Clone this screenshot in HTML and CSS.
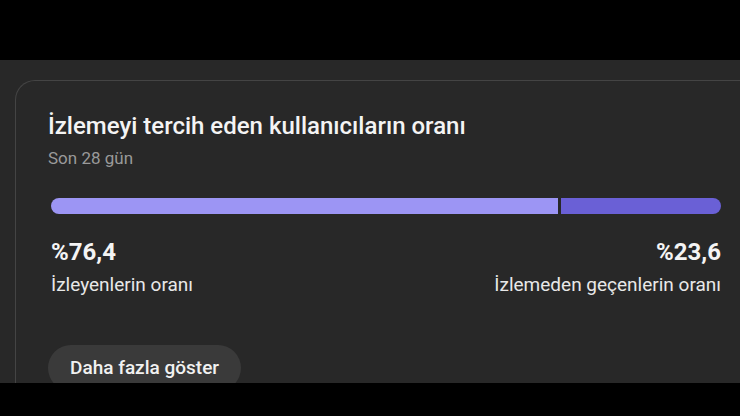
FILE: index.html
```html
<!DOCTYPE html>
<html lang="tr">
<head>
<meta charset="utf-8">
<link rel="stylesheet" href="styles.css">
</head>
<body>
<div class="top"></div>
<main class="area">
  <section class="card">
    <h2 class="title">İzlemeyi tercih eden kullanıcıların oranı</h2>
    <div class="sub">Son 28 gün</div>
    <div class="bar">
      <div class="seg seg-a" style="width:75.7%"></div>
      <div class="seg seg-b"></div>
    </div>
    <div class="stats">
      <div class="stat">
        <div class="num">%76,4</div>
        <div class="lbl">İzleyenlerin oranı</div>
      </div>
      <div class="stat right">
        <div class="num">%23,6</div>
        <div class="lbl">İzlemeden geçenlerin oranı</div>
      </div>
    </div>
    <button class="more">Daha fazla göster</button>
  </section>
</main>
<div class="bottom"></div>
</body>
</html>
```
FILE: styles.css
```css
* { box-sizing: border-box; }
html, body { margin: 0; padding: 0; }
body {
  width: 740px;
  height: 416px;
  overflow: hidden;
  background: #000;
  font-family: Roboto, "Liberation Sans", sans-serif;
  display: flex;
  flex-direction: column;
}
.top { height: 60px; background: #000; flex: none; }
.area {
  height: 323px;
  flex: none;
  background: #282828;
  padding: 20px 0 0 15px;
  overflow: hidden;
}
.bottom { flex: 1; background: #000; }
.card {
  width: 760px;
  height: 400px;
  border: 1.5px solid #444;
  border-right: none;
  border-radius: 20px 0 0 0;
  padding: 28.5px 0 0 32px;
  background: #282828;
}
.title {
  margin: 0;
  font-size: 24px;
  font-weight: 500;
  color: #f4f4f4;
  line-height: 32px;
}
.sub {
  margin-top: 4px;
  font-size: 17px;
  color: #9a9a9a;
  line-height: 24px;
}
.bar {
  margin-top: 28px;
  margin-left: 3px;
  width: 670px;
  height: 16px;
  display: flex;
  gap: 3px;
  border-radius: 8px;
  overflow: hidden;
}
.seg { height: 100%; }
.seg-a { background: #9c95f4; }
.seg-b { flex: 1; background: #6a60d6; }
.stats {
  width: 673px;
  padding-left: 3px;
  display: flex;
  justify-content: space-between;
  margin-top: 23.5px;
}
.stat { display: flex; flex-direction: column; }
.stat.right { align-items: flex-end; }
.num {
  font-size: 24px;
  font-weight: 700;
  color: #f4f4f4;
  line-height: 30px;
}
.lbl {
  margin-top: 5.5px;
  font-size: 19px;
  color: #e8e8e8;
  line-height: 24px;
}
.more {
  margin-top: 48px;
  height: 46px;
  padding: 0 22px;
  border: none;
  border-radius: 23px;
  background: #3a3a3a;
  color: #f1f1f1;
  font-family: Roboto, "Liberation Sans", sans-serif;
  font-size: 19px;
  font-weight: 500;
}
```
